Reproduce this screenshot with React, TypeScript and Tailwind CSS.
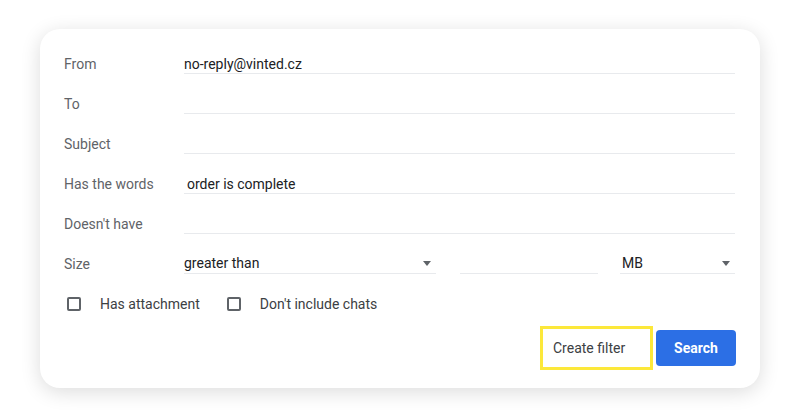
import { ChangeEvent, useState } from 'react';

type Field = {
  name: string;
  label: string;
  value: string;
  indent?: boolean;
};

const FIELDS: Field[] = [
  { name: 'from', label: 'From', value: 'no-reply@vinted.cz' },
  { name: 'to', label: 'To', value: '' },
  { name: 'subject', label: 'Subject', value: '' },
  { name: 'hasWords', label: 'Has the words', value: 'order is complete', indent: true },
  { name: 'doesntHave', label: "Doesn't have", value: '' },
];

function Caret() {
  return (
    <svg width="10" height="5" viewBox="0 0 10 5" className="shrink-0">
      <path d="M1 0h8L5 5z" fill="#5f6368" />
    </svg>
  );
}

function Checkbox({ label }: { label: string }) {
  const [checked, setChecked] = useState(false);
  return (
    <label className="flex items-center cursor-pointer">
      <span
        onClick={() => setChecked(c => !c)}
        className="w-[14px] h-[14px] border-2 border-[#5f6368] rounded-[2px] ml-[3px] mr-[19px]"
      />
      <span className="text-[14px] leading-[20px] text-[#3c4043]">{label}</span>
    </label>
  );
}

export default function App() {
  const [values, setValues] = useState<Record<string, string>>(
    Object.fromEntries(FIELDS.map(f => [f.name, f.value]))
  );

  const handleChange = (e: ChangeEvent<HTMLInputElement>) => {
    const { name, value } = e.target;
    setValues(prev => ({ ...prev, [name]: value }));
  };

  return (
    <div
      className="w-[800px] h-[419px] bg-white pt-[29px] pl-[40px]"
      style={{ fontFamily: 'Roboto, "Liberation Sans", Arial, sans-serif' }}
    >
      <div className="w-[720px] h-[359px] bg-white rounded-[20px] shadow-[0_4px_20px_rgba(0,0,0,0.14)] pt-[25px] pl-[24px] pr-[25px]">
        <div className="flex flex-col gap-[20px]">
          {FIELDS.map(f => (
            <div key={f.name} className="flex items-start h-[20px]">
              <div className="w-[120px] text-[14px] leading-[20px] text-[#5f6368]">{f.label}</div>
              <input
                name={f.name}
                value={values[f.name]}
                onChange={handleChange}
                className={`flex-1 h-[20px] text-[14px] leading-[19px] text-[#202124] border-b border-[#e8eaed] outline-none bg-transparent ${f.indent ? 'pl-[3px]' : ''}`}
              />
            </div>
          ))}

          <div className="flex items-start h-[20px]">
            <div className="w-[120px] text-[14px] leading-[20px] text-[#5f6368]">Size</div>
            <div className="w-[252px] h-[20px] flex items-center justify-between border-b border-[#e8eaed] pr-[4px]">
              <span className="text-[14px] leading-[19px] text-[#202124]">greater than</span>
              <Caret />
            </div>
            <input className="ml-[24px] w-[138px] h-[20px] border-b border-[#e8eaed] outline-none" />
            <div className="ml-[22px] flex-1 h-[20px] flex items-center justify-between border-b border-[#e8eaed] pl-[2px] pr-[4px]">
              <span className="text-[14px] leading-[19px] text-[#202124]">MB</span>
              <Caret />
            </div>
          </div>

          <div className="flex items-center h-[20px] gap-[24px]">
            <Checkbox label="Has attachment" />
            <Checkbox label="Don't include chats" />
          </div>
        </div>

        <div className="flex justify-end items-center mt-[12px] mr-[-1px]">
          <button className="w-[113px] h-[44px] border-[3px] border-[#fce83a] text-left pl-[10px] text-[14px] text-[#3c4043] bg-white">
            Create filter
          </button>
          <button className="ml-[3px] w-[80px] h-[36px] rounded-[4px] bg-[#2c6fe5] text-white text-[14px] font-bold">
            Search
          </button>
        </div>
      </div>
    </div>
  );
}
